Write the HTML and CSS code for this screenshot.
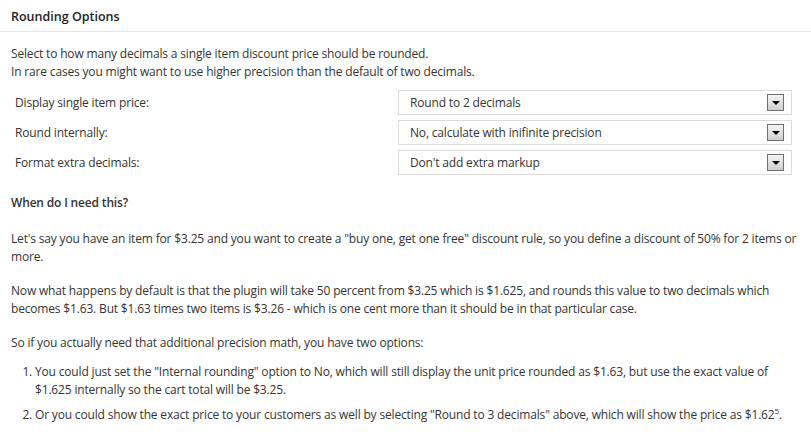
FILE: index.html
```html
<!DOCTYPE html>
<html>
<head>
<meta charset="utf-8">
<link rel="stylesheet" href="styles.css">
</head>
<body>
<div class="panel">
  <h2 class="panel-title">Rounding Options</h2>
  <div class="panel-body">
    <p class="intro">Select to how many decimals a single item discount price should be rounded.<br>In rare cases you might want to use higher precision than the default of two decimals.</p>
    <div class="form-grid">
      <div class="label">Display single item price:</div>
      <div class="select"><span class="select-text">Round to 2 decimals</span><span class="select-btn"><span class="tri"></span></span></div>
      <div class="label">Round internally:</div>
      <div class="select"><span class="select-text">No, calculate with inifinite precision</span><span class="select-btn"><span class="tri"></span></span></div>
      <div class="label">Format extra decimals:</div>
      <div class="select"><span class="select-text">Don't add extra markup</span><span class="select-btn"><span class="tri"></span></span></div>
    </div>
    <h3 class="sub-title">When do I need this?</h3>
    <p>Let's say you have an item for $3.25 and you want to create a "buy one, get one free" discount rule, so you define a discount of 50% for 2 items or more.</p>
    <p>Now what happens by default is that the plugin will take 50 percent from $3.25 which is $1.625, and rounds this value to two decimals which becomes $1.63. But $1.63 times two items is $3.26 - which is one cent more than it should be in that particular case.</p>
    <p class="lead-in">So if you actually need that additional precision math, you have two options:</p>
    <ol class="options">
      <li>You could just set the "Internal rounding" option to No, which will still display the unit price rounded as $1.63, but use the exact value of $1.625 internally so the cart total will be $3.25.</li>
      <li>Or you could show the exact price to your customers as well by selecting "Round to 3 decimals" above, which will show the price as $1.62<sup>5</sup>.</li>
    </ol>
  </div>
</div>
</body>
</html>
```
FILE: styles.css
```css
html, body {
  margin: 0;
  padding: 0;
  background: #fff;
}
body {
  font-family: "Open Sans", "Noto Sans", sans-serif;
  font-size: 12px;
  line-height: 18px;
  letter-spacing: -0.17px;
  color: #333;
}
.panel-title {
  margin: 0;
  height: 32px;
  box-sizing: border-box;
  padding: 7px 11px 0;
  font-size: 12.5px;
  font-weight: 600;
  line-height: 19px;
  letter-spacing: 0;
  color: #222;
  border-bottom: 1px solid #e6e6e6;
}
.panel-body {
  padding: 0 11px;
}
p {
  margin: 0 0 16px;
}
.intro {
  margin-top: 13px;
  margin-bottom: 9px;
}
.form-grid {
  display: grid;
  grid-template-columns: 387px 394px;
  row-gap: 5px;
  align-items: center;
}
.label {
  padding-left: 4px;
}
.select {
  height: 25px;
  box-sizing: border-box;
  border: 1px solid #dcdcdc;
  background: #fff;
  display: flex;
  align-items: center;
  justify-content: space-between;
  padding: 0 7px 0 11px;
}
.select-btn {
  width: 17px;
  height: 17px;
  box-sizing: border-box;
  border: 1px solid #6f6f6f;
  background: linear-gradient(#f4f4f4, #cfcfcf);
  display: flex;
  align-items: center;
  justify-content: center;
}
.tri {
  width: 0;
  height: 0;
  border-left: 4px solid transparent;
  border-right: 4px solid transparent;
  border-top: 4px solid #000;
  margin-top: 1px;
}
.sub-title {
  margin: 19px 0 18px;
  font-size: 12px;
  font-weight: 600;
  line-height: 18px;
  color: #333;
}
.lead-in {
  margin-bottom: 11px;
}
.options {
  margin: 0;
  padding-left: 24px;
}
.options li {
  margin-bottom: 7px;
}
sup {
  font-size: 8px;
  line-height: 0;
}
```
